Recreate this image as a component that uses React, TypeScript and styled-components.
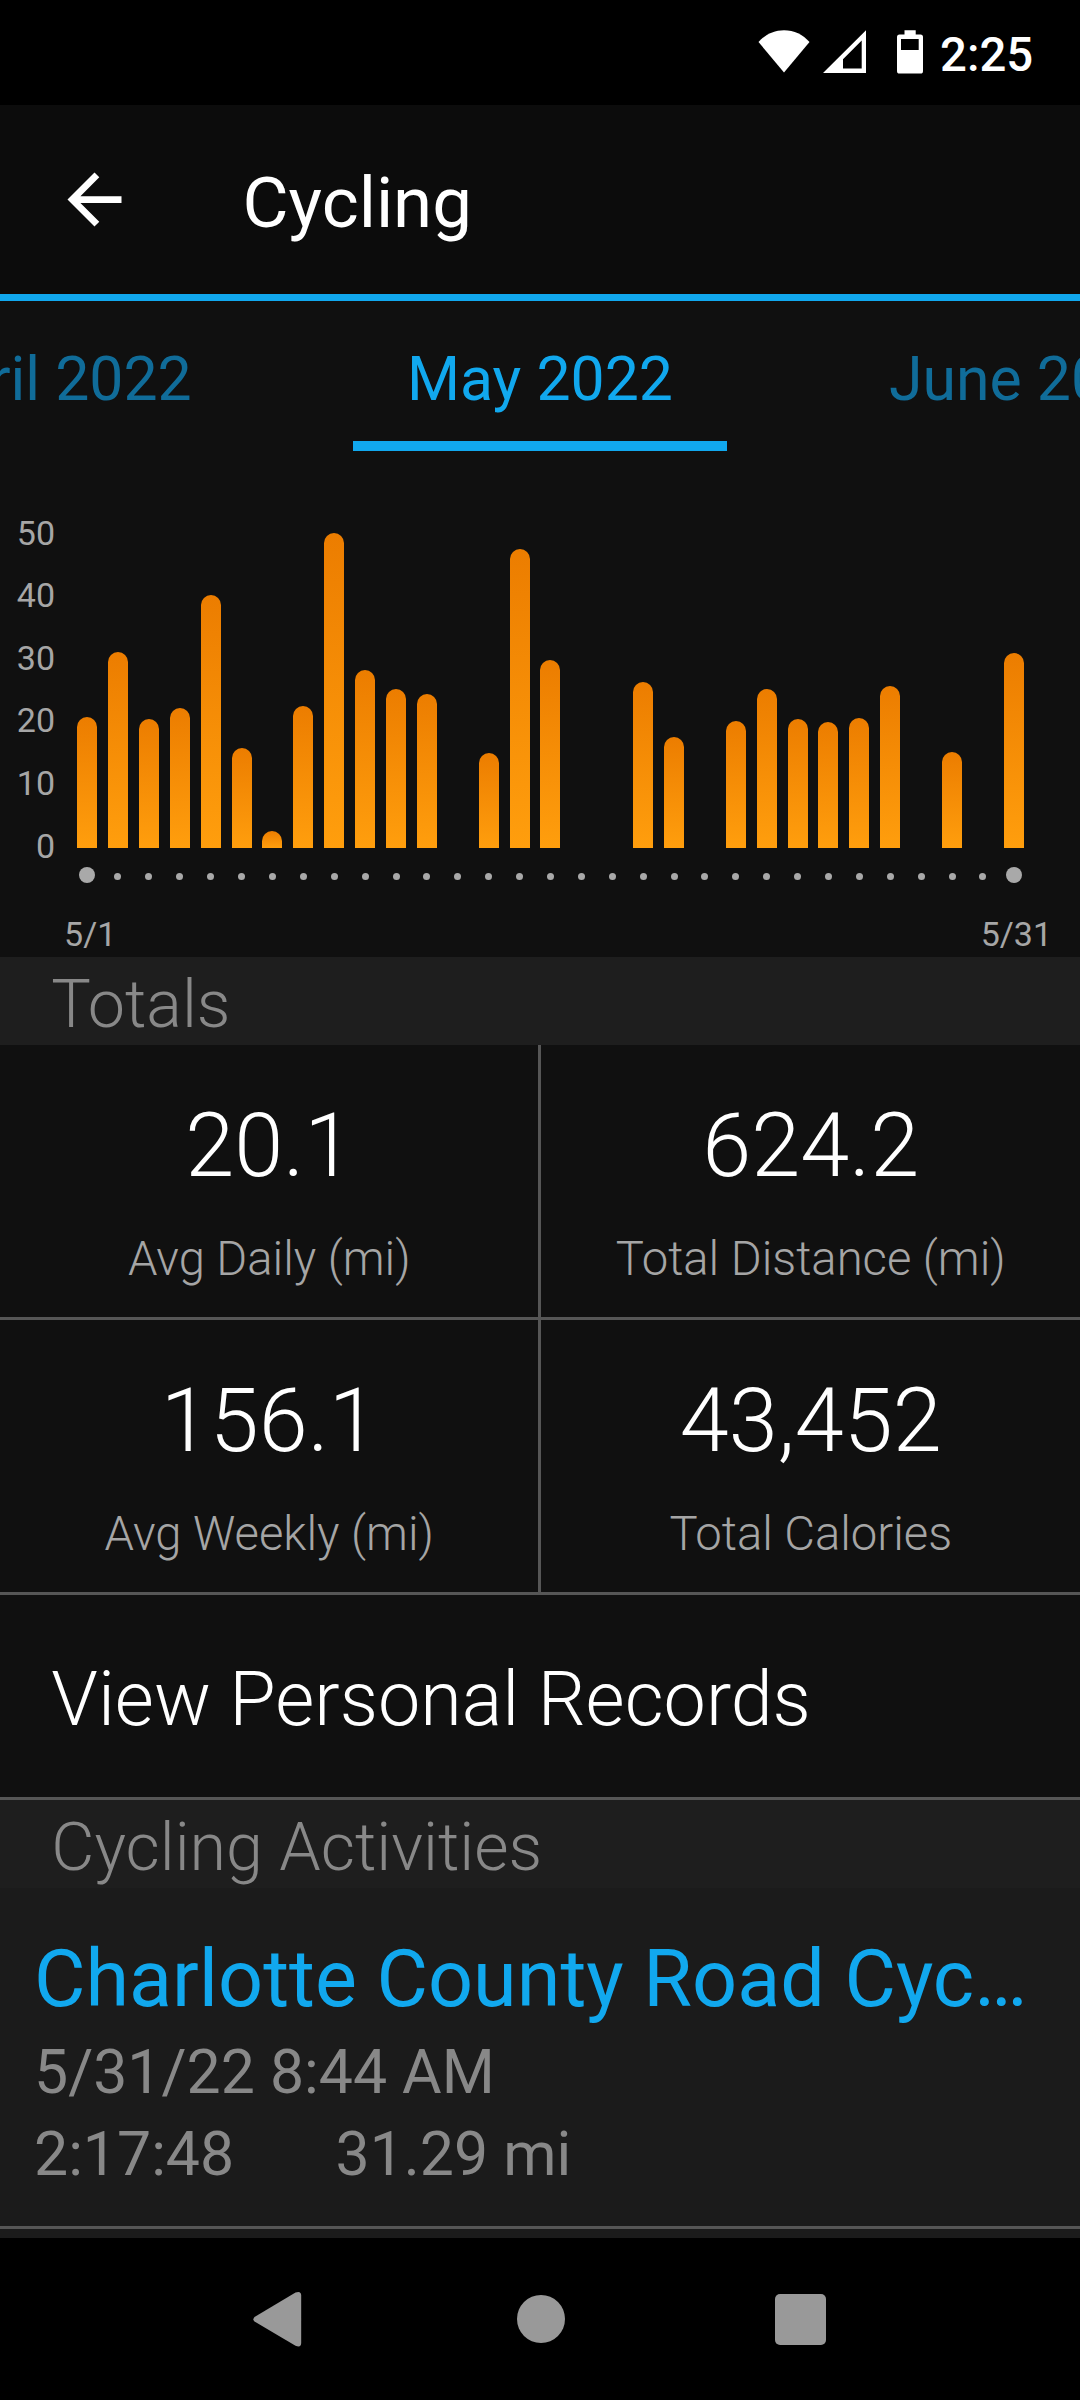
import React from 'react';
import styled, { createGlobalStyle } from 'styled-components';

const accent = '#11a8ee';
const line = '#565656';

const GlobalStyle = createGlobalStyle`
  * { box-sizing: border-box; }
  body { margin: 0; background: #000; }
`;

const Screen = styled.div`
  width: 1080px;
  height: 2400px;
  overflow: hidden;
  display: flex;
  flex-direction: column;
  background: #101010;
  color: #fff;
  font-family: Roboto, "Noto Sans", sans-serif;
  white-space: nowrap;
`;

const StatusBar = styled.div`
  flex: none;
  height: 105px;
  display: flex;
  justify-content: flex-end;
  align-items: flex-start;
  padding: 30px 46.8px 0 0;
  background: #000;
`;

const StatusIcon = styled.svg<{ $gap: number }>`
  flex: none;
  display: block;
  margin-right: ${(p) => p.$gap}px;
`;

const Clock = styled.span`
  font-size: 47.3px;
  line-height: 50px;
  font-weight: 500;
`;

const Header = styled.header`
  flex: none;
  height: 196px;
  display: flex;
  align-items: center;
  gap: 107.5px;
  padding-left: 54px;
  background: #0c0c0c;
  border-bottom: 7px solid ${accent};
`;

const BackButton = styled.button`
  width: 81px;
  height: 81px;
  padding: 0;
  border: 0;
  background: none;
  svg { display: block; }
`;

const Title = styled.h1`
  margin: 6px 0 0;
  font-size: 70.8px;
  line-height: 77px;
  font-weight: 400;
`;

const Tabs = styled.nav`
  flex: none;
  height: 150px;
  display: grid;
  grid-template-columns: 353px 374px 353px;
`;

const Tab = styled.div<{ $side?: 'left' | 'right' }>`
  display: flex;
  overflow: hidden;
  justify-content: ${(p) => (p.$side === 'left' ? 'flex-end' : p.$side === 'right' ? 'flex-start' : 'center')};
  padding: 43px ${(p) => (p.$side === 'left' ? 161.3 : 0)}px 0 ${(p) => (p.$side === 'right' ? 162 : 0)}px;
  border-bottom: 10px solid ${(p) => (p.$side ? 'transparent' : accent)};
  color: ${(p) => (p.$side ? '#106c99' : accent)};
  font-size: 60.75px;
  line-height: 71px;
`;

const Chart = styled.section`
  flex: none;
  height: 506px;
  display: flex;
  color: #a6a6a6;
  font-size: 34px;
`;

const YAxis = styled.div`
  width: 55px;
  padding-top: 50.7px;
  text-align: right;
  line-height: 62.6px;
`;

const Plot = styled.div`
  width: 947px;
  margin-left: 22.1px;
`;

const Bars = styled.div`
  height: 397px;
  display: flex;
  justify-content: space-between;
  align-items: flex-end;
`;

const Bar = styled.div`
  width: 20px;
  border-radius: 10px 10px 0 0;
  background: linear-gradient(#ec7d00, #ff9e0d);
`;

const Ticks = styled.div`
  height: 16px;
  margin-top: 19px;
  display: flex;
  justify-content: space-between;
`;

const TickSlot = styled.div`
  width: 20px;
  display: flex;
  justify-content: center;
`;

const Tick = styled.span<{ $large: boolean }>`
  width: ${(p) => (p.$large ? 16 : 7)}px;
  height: ${(p) => (p.$large ? 16 : 7)}px;
  margin-top: ${(p) => (p.$large ? 0 : 6)}px;
  border-radius: 50%;
  background: #a9a9a9;
`;

const XLabels = styled.div`
  display: flex;
  justify-content: space-between;
  margin: 31px -28px 0 -13px;
  line-height: 40px;
`;

const SectionTitle = styled.h2`
  flex: none;
  height: 88px;
  margin: 0;
  padding-left: 51.3px;
  background: #1e1e1e;
  color: #888;
  font-size: 66.4px;
  line-height: 94px;
  font-weight: 300;
`;

const StatRow = styled.div`
  flex: none;
  height: 275px;
  display: grid;
  grid-template-columns: 541px 539px;
  border-bottom: 3px solid ${line};
`;

const Stat = styled.div`
  padding: 49px 0 0 0.5px;
  text-align: center;
  font-weight: 300;
  &:first-child { border-right: 3px solid ${line}; }
`;

const StatValue = styled.div`
  font-size: 88.3px;
  line-height: 104px;
`;

const StatLabel = styled.div`
  margin-top: 33px;
  color: #a5a5a5;
  font-size: 47.2px;
  line-height: 56px;
`;

const RecordsLink = styled.div`
  flex: none;
  height: 205px;
  padding-left: 51.3px;
  border-bottom: 3px solid ${line};
  font-size: 75.5px;
  line-height: 208px;
  font-weight: 300;
`;

const Activity = styled.article`
  flex: none;
  height: 341px;
  padding: 45px 0 0 34px;
  background: #1b1b1b;
  border-bottom: 3px solid ${line};
  color: #888;
  font-size: 60.75px;
  line-height: 71px;
`;

const ActivityName = styled.div`
  color: ${accent};
  font-size: 79.1px;
  line-height: 92px;
  margin-bottom: 12px;
`;

const ActivityStats = styled.div`
  display: grid;
  grid-template-columns: 301.5px auto;
  margin-top: 11px;
`;

const NextActivity = styled.div`
  flex: none;
  height: 9px;
  background: #1b1b1b;
`;

const NavBar = styled.footer`
  flex: none;
  height: 162px;
  display: flex;
  align-items: center;
  padding-left: 253px;
  background: #000;
  svg { display: block; }
`;

const HomeDot = styled.span`
  width: 48px;
  height: 48px;
  margin: 0 210.5px 0 215px;
  border-radius: 50%;
  background: #999;
`;

const RecentsSquare = styled.span`
  width: 51px;
  height: 51px;
  margin-top: 1px;
  border-radius: 5px;
  background: #999;
`;

/* Bar heights in pixels, one entry per day of the month. */
const days = [
  131, 196, 129, 140, 253, 100, 17, 142, 315, 178, 159, 154, 0, 95, 299, 188,
  0, 0, 166, 111, 0, 127, 159, 129, 126, 130, 162, 0, 96, 0, 195,
];

const stats = [
  [['20.1', 'Avg Daily (mi)'], ['624.2', 'Total Distance (mi)']],
  [['156.1', 'Avg Weekly (mi)'], ['43,452', 'Total Calories']],
];

export default function App() {
  return (
    <Screen>
      <GlobalStyle />
      <StatusBar>
        <StatusIcon $gap={13.5} width="52" height="44" viewBox="0 0 52 44" fill="#fff">
          <path d="M26 42.5 L0.5 12 C7 4.500 16 0.200 26 0.200 S45 4.500 51.500 12 Z" />
        </StatusIcon>
        <StatusIcon $gap={31} width="43" height="44" viewBox="0 0 43 44" fill="#fff" fillRule="evenodd">
          <path d="M0 43 L43 0.300 V43 Z M20 29.300 V38.500 H38.700 V10.600 Z" />
        </StatusIcon>
        <StatusIcon $gap={17} width="26" height="44" viewBox="0 0 26 44" fill="#fff" fillRule="evenodd">
          <path d="M7.500 0.300 H18.700 V4.500 H23.500 Q26 4.500 26 7 V41 Q26 43.600 23.500 43.600 H2.500 Q0 43.600 0 41 V7 Q0 4.500 2.500 4.500 H7.500 Z M4 9 V20 H21.700 V9 Z" />
        </StatusIcon>
        <Clock>2:25</Clock>
      </StatusBar>

      <Header>
        <BackButton aria-label="Back">
          <svg width="81" height="81" viewBox="0 0 24 24" fill="#fff">
            <path d="M20 11H7.830l5.590-5.590L12 4l-8 8 8 8 1.410-1.410L7.830 13H20v-2z" />
          </svg>
        </BackButton>
        <Title>Cycling</Title>
      </Header>

      <Tabs>
        <Tab $side="left">April 2022</Tab>
        <Tab>May 2022</Tab>
        <Tab $side="right">June 2022</Tab>
      </Tabs>

      <Chart>
        <YAxis>
          {[50, 40, 30, 20, 10, 0].map((v) => (
            <div key={v}>{v}</div>
          ))}
        </YAxis>
        <Plot>
          <Bars>
            {days.map((h, i) => (
              <Bar key={i} style={{ height: h }} />
            ))}
          </Bars>
          <Ticks>
            {days.map((_, i) => (
              <TickSlot key={i}>
                <Tick $large={i === 0 || i === days.length - 1} />
              </TickSlot>
            ))}
          </Ticks>
          <XLabels>
            <span>5/1</span>
            <span>5/31</span>
          </XLabels>
        </Plot>
      </Chart>

      <SectionTitle>Totals</SectionTitle>
      {stats.map((row, i) => (
        <StatRow key={i}>
          {row.map(([value, label]) => (
            <Stat key={label}>
              <StatValue>{value}</StatValue>
              <StatLabel>{label}</StatLabel>
            </Stat>
          ))}
        </StatRow>
      ))}

      <RecordsLink>View Personal Records</RecordsLink>

      <SectionTitle>Cycling Activities</SectionTitle>
      <Activity>
        <ActivityName>Charlotte County Road Cyc…</ActivityName>
        <div>5/31/22 8:44 AM</div>
        <ActivityStats>
          <span>2:17:48</span>
          <span>31.29 mi</span>
        </ActivityStats>
      </Activity>
      <NextActivity />

      <NavBar>
        <svg width="48.500" height="56" viewBox="0 0 48.500 56" fill="#999">
          <path d="M1.500 26 L42.500 1.500 Q48.200 -0.500 48.200 4.500 V52 Q48.200 57 42.500 54.700 L1.500 30.500 Q-0.700 28.250 1.500 26 Z" />
        </svg>
        <HomeDot />
        <RecentsSquare />
      </NavBar>
    </Screen>
  );
}
